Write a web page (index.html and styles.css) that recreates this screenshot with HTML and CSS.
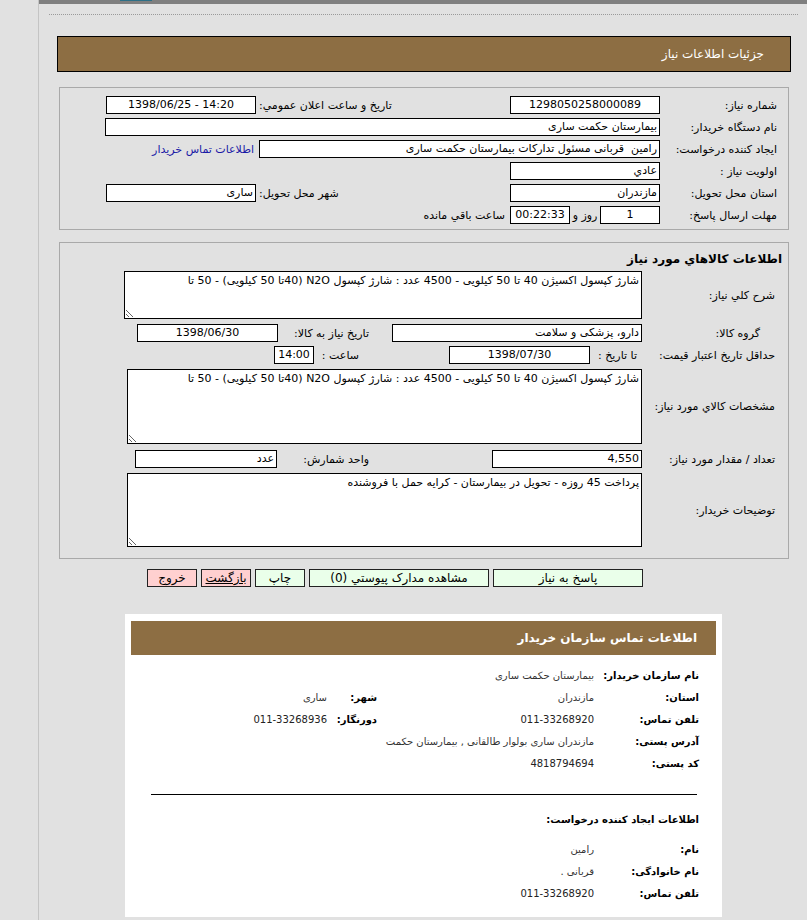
FILE: index.html
```html
<!DOCTYPE html>
<html lang="fa">
<head>
<meta charset="utf-8">
<title>جزئیات اطلاعات نیاز</title>
<link rel="stylesheet" href="styles.css">
</head>
<body>
<div class="page">
  <div class="side"></div>
  <div class="main" dir="rtl">
    <div class="topbar"><span class="tab"></span></div>
    <div class="dots"></div>
    <div class="hdr">جزئیات اطلاعات نیاز</div>

    <div class="box box1">
      <div class="grid1">
        <div class="lb">شماره نیاز:</div>
        <div class="fld"><span class="inp w150 c">1298050258000089</span></div>
        <div class="lb2">تاريخ و ساعت اعلان عمومي:</div>
        <div class="fld"><span class="inp w150 c"><span dir="ltr">1398/06/25 - 14:20</span></span></div>

        <div class="lb">نام دستگاه خريدار:</div>
        <div class="fld span3"><span class="inp wfull">بيمارستان حکمت ساری</span></div>

        <div class="lb">ایجاد کننده درخواست:</div>
        <div class="fld span2"><span class="inp w401">رامین&nbsp; قربانی مسئول تدارکات بیمارستان حکمت ساری</span></div>
        <div class="fld"><a class="link" href="#">اطلاعات تماس خریدار</a></div>

        <div class="lb">اولويت نياز :</div>
        <div class="fld"><span class="inp w150">عادي</span></div>
        <div></div>
        <div></div>

        <div class="lb">استان محل تحويل:</div>
        <div class="fld"><span class="inp w150">مازندران</span></div>
        <div class="lb2">شهر محل تحويل:</div>
        <div class="fld"><span class="inp w150">ساری</span></div>

        <div class="lb">مهلت ارسال پاسخ:</div>
        <div class="fld days">
          <span class="inp w60 c">1</span>
          <span>روز و</span>
          <span class="inp w60 c">00:22:33</span>
        </div>
        <div class="fld rem">ساعت باقي مانده</div>
        <div></div>
      </div>
    </div>

    <div class="box box2">
      <div class="btitle">اطلاعات کالاهاي مورد نياز</div>

      <div class="r2">
        <div class="lb3">شرح کلي نياز:</div>
        <textarea class="ta ta1" readonly>شارژ کپسول اکسیژن 40 تا 50 کیلویی - 4500 عدد : شارژ کپسول N2O (40تا 50 کیلویی) - 50 تا</textarea>
      </div>

      <div class="r2 gap5">
        <div class="lb3 lbg">گروه کالا:</div>
        <span class="inp w250">دارو، پزشکی و سلامت</span>
        <div class="cell c114">تاريخ نياز به کالا:</div>
        <span class="inp w141 c">1398/06/30</span>
      </div>

      <div class="r2 gap4">
        <div class="lb3">حداقل تاريخ اعتبار قيمت:</div>
        <div class="cell c52">تا تاريخ :</div>
        <span class="inp w141 c">1398/07/30</span>
        <div class="cell c135">ساعت :</div>
        <span class="inp w40 c">14:00</span>
      </div>

      <div class="r2 gap5">
        <div class="lb3">مشخصات کالاي مورد نياز:</div>
        <textarea class="ta ta2" readonly>شارژ کپسول اکسیژن 40 تا 50 کیلویی - 4500 عدد : شارژ کپسول N2O (40تا 50 کیلویی) - 50 تا</textarea>
      </div>

      <div class="r2 gap6">
        <div class="lb3">تعداد / مقدار مورد نياز:</div>
        <span class="inp w150">4,550</span>
        <div class="cell c215">واحد شمارش:</div>
        <span class="inp w142">عدد</span>
      </div>

      <div class="r2 gap5">
        <div class="lb3">توضيحات خريدار:</div>
        <textarea class="ta ta3" readonly>پرداخت 45 روزه - تحويل در بيمارستان - کرايه حمل با فروشنده</textarea>
      </div>
    </div>

    <div class="btns">
      <span class="btn green w150">پاسخ به نياز</span>
      <span class="btn green w180">مشاهده مدارک پيوستي (0)</span>
      <span class="btn green w50">چاپ</span>
      <span class="btn pink w50 ul">بازگشت</span>
      <span class="btn pink w50">خروج</span>
    </div>

    <div class="card">
      <div class="chdr">اطلاعات تماس سازمان خريدار</div>
      <div class="crows">
        <div class="crow">
          <div class="cl">نام سازمان خریدار:</div>
          <div class="cv">بیمارستان حکمت ساری</div>
        </div>
        <div class="crow">
          <div class="cl">استان:</div>
          <div class="cv cvw">مازندران</div>
          <div class="cl2">شهر:</div>
          <div class="cv">ساری</div>
        </div>
        <div class="crow">
          <div class="cl">تلفن تماس:</div>
          <div class="cv cvw num">011-33268920</div>
          <div class="cl2">دورنگار:</div>
          <div class="cv num">011-33268936</div>
        </div>
        <div class="crow">
          <div class="cl">آدرس پستی:</div>
          <div class="cv">مازندران ساری بولوار طالقانی , بیمارستان حکمت</div>
        </div>
        <div class="crow">
          <div class="cl">کد پستی:</div>
          <div class="cv num">4818794694</div>
        </div>
      </div>
      <div class="rule"></div>
      <div class="ctitle">اطلاعات ایجاد کننده درخواست:</div>
      <div class="crows2">
        <div class="crow">
          <div class="cl">نام:</div>
          <div class="cv">رامین</div>
        </div>
        <div class="crow">
          <div class="cl">نام خانوادگی:</div>
          <div class="cv">قربانی .</div>
        </div>
        <div class="crow">
          <div class="cl">تلفن تماس:</div>
          <div class="cv num">011-33268920</div>
        </div>
      </div>
    </div>
  </div>
</div>
</body>
</html>
```

FILE: styles.css
```css
* { box-sizing: border-box; }
html, body { margin: 0; padding: 0; }
body {
  background: #e1e1e1;
  font-family: "DejaVu Sans", "Noto Sans", sans-serif;
  font-size: 11px;
  color: #000;
  width: 807px;
  height: 920px;
  overflow: hidden;
}
.page { display: flex; min-height: 920px; }
.side { width: 39px; flex: none; border-right: 1px solid #c4c4c4; }
.main { flex: 1; min-width: 0; }

.topbar {
  height: 4px;
  background: #7f7f7f;
  display: flex;
  direction: ltr;
  padding-left: 81px;
}
.tab { width: 32px; height: 1px; background: #2c6f86; }
.dots { margin: 10px 9px 0 10px; border-top: 1px dotted #9a9a9a; }

.hdr {
  margin: 21px 16px 0 18px;
  height: 36px;
  border: 1px solid #000;
  background: #8d6e43;
  color: #fff;
  font-size: 12px;
  line-height: 34px;
  padding-right: 26px;
}

.box {
  border: 1px solid #a9a9a9;
  margin: 15px 18px 0 20px;
}
.box1 { padding: 8px 0 5px; }
.box2 { margin-top: 12px; padding: 8px 0 11px; }

.grid1 {
  display: grid;
  grid-template-columns: 128px 151px 253px 1fr;
  grid-auto-rows: 18px;
  row-gap: 4px;
}
.lb { padding-right: 11px; align-self: center; white-space: nowrap; }
.lb2 { justify-self: end; align-self: center; margin-left: 3px; white-space: nowrap; }
.fld { display: flex; align-items: center; white-space: nowrap; }
.span2 { grid-column: span 2; }
.span3 { grid-column: span 3; }
.link { color: #1a1aa6; text-decoration: none; padding-right: 2px; }
.days { justify-content: space-between; padding-left: 1px; }
.rem { padding-right: 4px; }

.inp {
  display: block;
  flex: none;
  background: #fff;
  border: 1px solid #000;
  height: 18px;
  line-height: 16px;
  padding: 0 2px;
  white-space: nowrap;
  overflow: hidden;
  font-size: 11px;
}
.c { text-align: center; }
.w40 { width: 40px; }
.w60 { width: 60px; }
.w141 { width: 141px; }
.w142 { width: 142px; }
.w150 { width: 150px; }
.w250 { width: 250px; }
.w401 { width: 401px; }
.wfull { width: 555px; }

.btitle {
  font-weight: bold;
  font-size: 12px;
  height: 16px;
  line-height: 16px;
  padding-right: 6px;
  margin-bottom: 4px;
}
.r2 { display: flex; align-items: center; }
.gap4 { margin-top: 4px; }
.gap5 { margin-top: 5px; }
.gap6 { margin-top: 6px; }
.lb3 {
  width: 146px;
  flex: none;
  padding-right: 13px;
  white-space: nowrap;
}
.lbg { padding-right: 28px; }
.cell { flex: none; white-space: nowrap; }
.c52 { width: 52px; padding-right: 5px; }
.c114 { width: 114px; padding-right: 23px; }
.c135 { width: 135px; padding-right: 90px; }
.c215 { width: 215px; padding-right: 123px; }

.ta {
  display: block;
  flex: none;
  background: #fff;
  border: 1px solid #000;
  font-family: "DejaVu Sans", sans-serif;
  font-size: 11px;
  line-height: 15px;
  color: #000;
  padding: 1px 2px;
  margin: 0;
  overflow: hidden;
}
.ta1 { width: 518px; height: 48px; }
.ta2 { width: 515px; height: 75px; }
.ta3 { width: 515px; height: 74px; }

.btns {
  display: flex;
  gap: 4px;
  padding-right: 164px;
  margin-top: 10px;
}
.btn {
  display: block;
  height: 18px;
  line-height: 16px;
  border: 1px solid #222;
  text-align: center;
  font-size: 12px;
  white-space: nowrap;
}
.btn.w50 { width: 50px; }
.btn.w150 { width: 150px; }
.btn.w180 { width: 180px; }
.green { background: #eaffea; }
.pink { background: #ffd0d0; }
.ul { text-decoration: underline; }

.card {
  width: 597px;
  margin: 27px 85px 0 auto;
  background: #fff;
  padding: 7px 6px 13px;
}
.chdr {
  height: 34px;
  line-height: 34px;
  background: #8d6e43;
  color: #fff;
  font-weight: bold;
  font-size: 12px;
  padding-right: 19px;
}
.crows { margin-top: 9px; }
.crow {
  display: flex;
  align-items: center;
  height: 22px;
  padding-right: 17px;
}
.cl { width: 105px; flex: none; font-weight: bold; font-size: 10px; white-space: nowrap; }
.cl2 { width: 50px; flex: none; font-weight: bold; font-size: 10px; white-space: nowrap; }
.cv { font-size: 10px; color: #333; white-space: nowrap; }
.cvw { width: 217px; flex: none; }
.num { font-size: 10px; color: #222; }
.rule { margin: 20px 19px 0 20px; border-top: 1px solid #000; }
.ctitle {
  margin-top: 15px;
  height: 20px;
  line-height: 20px;
  font-weight: bold;
  font-size: 10px;
  padding-right: 17px;
}
.crows2 { margin-top: 8px; }
```
